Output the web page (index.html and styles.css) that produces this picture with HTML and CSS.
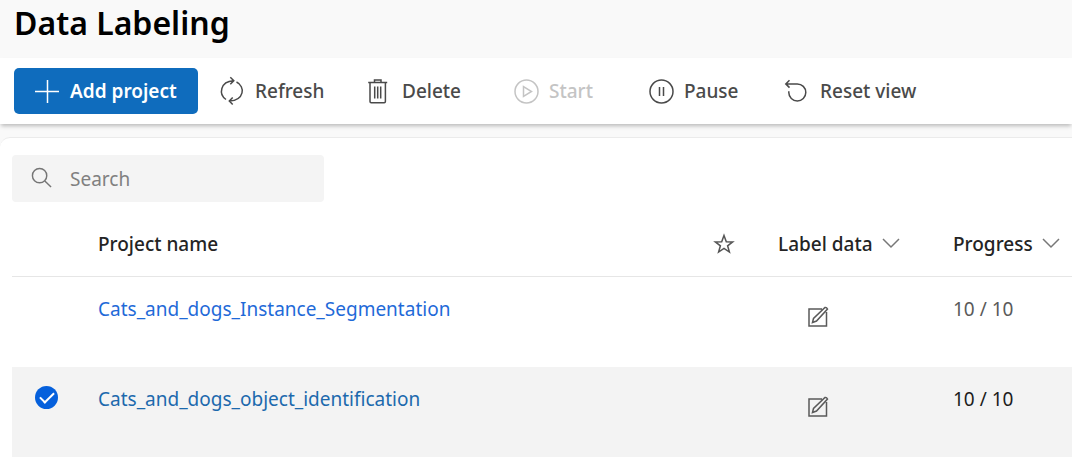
FILE: index.html
```html
<!DOCTYPE html>
<html lang="en">
<head>
  <meta charset="UTF-8" />
  <meta name="viewport" content="width=device-width, initial-scale=1.0"/>
  <title>Data Labeling</title>
  <link rel="stylesheet" href="styles.css">
</head>
<body>
  <header class="page-header">
    <h1>Data Labeling</h1>
  </header>

  <div class="toolbar" role="toolbar" aria-label="Project actions">
    <button type="button" class="primary">
      <svg class="icon" viewBox="0 0 25 25"><path d="M12.500 1v23M0 12.500h24"/></svg>
      Add project
    </button>
    <button type="button">
      <svg class="icon" viewBox="0 0 25 25"><path d="M6 20.500C-1.500 15.500 0 2.500 13.500 1.800M10.300-1.800l3.500 3.600-3.500 3.500M16.500 3C25.500 7.500 24.500 21 9.500 22M12.700 18.500L9.300 22l3.400 3.500"/></svg>
      Refresh
    </button>
    <button type="button">
      <svg class="icon" viewBox="0 0 25 25"><path d="M1.200 3.500h19M7.500 3.500V1h6.500v2.500M3 3.500v19q0 1.200 1.200 1.200h13q1.200 0 1.200-1.200v-19M7.700 7.500v12M10.700 7.500v12M13.700 7.500v12"/></svg>
      Delete
    </button>
    <button type="button" disabled>
      <svg class="icon" viewBox="0 0 25 25"><circle cx="12.500" cy="12.500" r="11.500"/><path d="M9.500 7.500v10l8-5z"/></svg>
      Start
    </button>
    <button type="button">
      <svg class="icon" viewBox="0 0 25 25"><circle cx="12.500" cy="12.500" r="11.500"/><path d="M10.500 8v9M14.500 8v9"/></svg>
      Pause
    </button>
    <button type="button">
      <svg class="icon" viewBox="0 0 25 25"><path d="M4.500 1.200L.8 4.900l3.700 3.700M.8 4.900h11.500a8.500 8.500 0 1 1-8.500 8.500v-1.200"/></svg>
      Reset view
    </button>
  </div>

  <main class="panel">
    <div class="search">
      <svg class="search-icon" viewBox="0 0 22 22"><circle cx="9" cy="8" r="7.500"/><path d="M14.500 13.500l6.500 6.500"/></svg>
      <input type="search" placeholder="Search" aria-label="Search" />
    </div>

    <table>
      <thead>
        <tr>
          <th class="col-check"></th>
          <th class="col-name">Project name</th>
          <th class="col-star" aria-label="Favorite">
            <svg class="star" viewBox="0 0 20 20"><path d="M10 1.500l2.300 6.200 6.400.2-5.100 3.900 1.800 6.300L10 14.500l-5.400 3.600 1.800-6.300L1.300 7.900l6.400-.2z"/></svg>
          </th>
          <th class="col-label">
            <button type="button" class="sort">Label data <svg class="chevron" viewBox="0 0 18 10"><path d="M1 0l8 8 8-8"/></svg></button>
          </th>
          <th class="col-progress">
            <button type="button" class="sort">Progress <svg class="chevron" viewBox="0 0 18 10"><path d="M1 0l8 8 8-8"/></svg></button>
          </th>
        </tr>
      </thead>
      <tbody>
        <tr>
          <td class="check"><input type="checkbox" aria-label="Select Cats_and_dogs_Instance_Segmentation" /></td>
          <td><a href="#">Cats_and_dogs_Instance_Segmentation</a></td>
          <td></td>
          <td class="edit">
            <a href="#" aria-label="Label data"><svg viewBox="0 0 22 22"><path d="M15 3H2v17h17.500V6M5.500 16.500l1-4L18 1.500q1.500-.5 2.500 1.500L9.500 15z"/></svg></a>
          </td>
          <td>10 / 10</td>
        </tr>
        <tr class="selected">
          <td class="check"><input type="checkbox" aria-label="Select Cats_and_dogs_object_identification" checked /></td>
          <td><a href="#">Cats_and_dogs_object_identification</a></td>
          <td></td>
          <td class="edit">
            <a href="#" aria-label="Label data"><svg viewBox="0 0 22 22"><path d="M15 3H2v17h17.500V6M5.500 16.500l1-4L18 1.500q1.500-.5 2.500 1.500L9.500 15z"/></svg></a>
          </td>
          <td>10 / 10</td>
        </tr>
      </tbody>
    </table>
  </main>
</body>
</html>
```

FILE: styles.css
```css
* {
  box-sizing: border-box;
}

body {
  margin: 0;
  background: #f9f9f9;
  color: #242424;
  font-family: 'Noto Sans', 'Open Sans', sans-serif;
  font-size: 19px;
  line-height: 26px;
}

button,
input {
  font: inherit;
  color: inherit;
}

svg {
  display: block;
  flex: none;
  overflow: visible;
  fill: none;
  stroke: currentColor;
  stroke-width: 1.5;
}

.page-header {
  padding: 2px 14px 14px;
}

h1 {
  margin: 0;
  color: #000;
  font-size: 32px;
  font-weight: 600;
  line-height: 42px;
}

.toolbar {
  display: grid;
  grid-template-columns: 206px 147px 147px 135px 136px auto;
  align-items: center;
  padding: 10px 14px;
  background: #fff;
  box-shadow: 0 3px 4px -1px rgba(0, 0, 0, 0.25);
}

.toolbar button {
  display: flex;
  align-items: center;
  gap: 10px;
  height: 46px;
  padding: 0;
  border: none;
  background: none;
  color: #4a4a4a;
  font-weight: 500;
  white-space: nowrap;
  cursor: pointer;
}

.toolbar .primary {
  width: 184px;
  padding-left: 21px;
  border-radius: 5px;
  background: #0f6cbd;
  color: #fff;
  font-weight: 600;
}

.toolbar button:disabled {
  color: #c4c4c4;
  cursor: default;
}

.icon {
  width: 25px;
  height: 25px;
}

.panel {
  margin-top: 13px;
  padding: 17px 0 0 12px;
  border-top: 1px solid #ebebeb;
  border-radius: 10px 0 0 0;
  background: #fff;
}

.search {
  display: flex;
  align-items: center;
  gap: 18px;
  width: 312px;
  height: 47px;
  padding: 0 19px;
  border-radius: 4px;
  background: #f4f4f4;
  color: #757575;
}

.search input {
  flex: 1;
  min-width: 0;
  padding: 0;
  border: none;
  outline: none;
  background: none;
}

.search input::placeholder {
  color: #808080;
}

.search-icon {
  width: 21px;
  height: 21px;
}

table {
  width: 100%;
  margin-top: 11px;
  border-collapse: collapse;
  table-layout: fixed;
}

th {
  height: 63px;
  padding: 0;
  border-bottom: 1px solid #e6e6e6;
  font-weight: 500;
  text-align: left;
  white-space: nowrap;
}

td {
  height: 91px;
  padding: 19px 0 0;
  color: #5a5a5a;
  vertical-align: top;
}

.col-check {
  width: 86px;
}

.col-star {
  width: 64px;
}

.col-label {
  width: 175px;
}

.col-progress {
  width: 119px;
}

.star {
  width: 20px;
  height: 20px;
  color: #555;
}

.sort {
  display: flex;
  align-items: center;
  gap: 9px;
  padding: 0;
  border: none;
  background: none;
  cursor: pointer;
}

.chevron {
  width: 18px;
  height: 10px;
  color: #777;
}

td a {
  color: #1f6ad8;
  text-decoration: none;
}

td a:hover {
  text-decoration: underline;
}

.edit {
  padding: 29px 0 0 29px;
}

.edit a {
  display: inline-block;
  color: #5a5a5a;
}

.edit svg {
  width: 22px;
  height: 22px;
}

.check {
  padding-left: 23px;
}

/* the tick only shows on selected rows or on hover */
.check input {
  appearance: none;
  display: grid;
  place-items: center;
  width: 23px;
  height: 23px;
  margin: 0;
  border-radius: 50%;
}

tr:hover .check input {
  border: 1px solid #999;
}

.check input:checked {
  border: none;
  background: #0560dc;
}

.check input:checked::after {
  content: '';
  width: 12px;
  height: 6px;
  margin-bottom: 3px;
  border: solid #fff;
  border-width: 0 0 2px 2px;
  transform: rotate(-45deg);
}

.selected {
  background: #f3f3f3;
}

.selected td {
  color: #1c1c1c;
}

.selected td a {
  color: #1c69ad;
}

.selected .edit a {
  color: #5a5a5a;
}
```
